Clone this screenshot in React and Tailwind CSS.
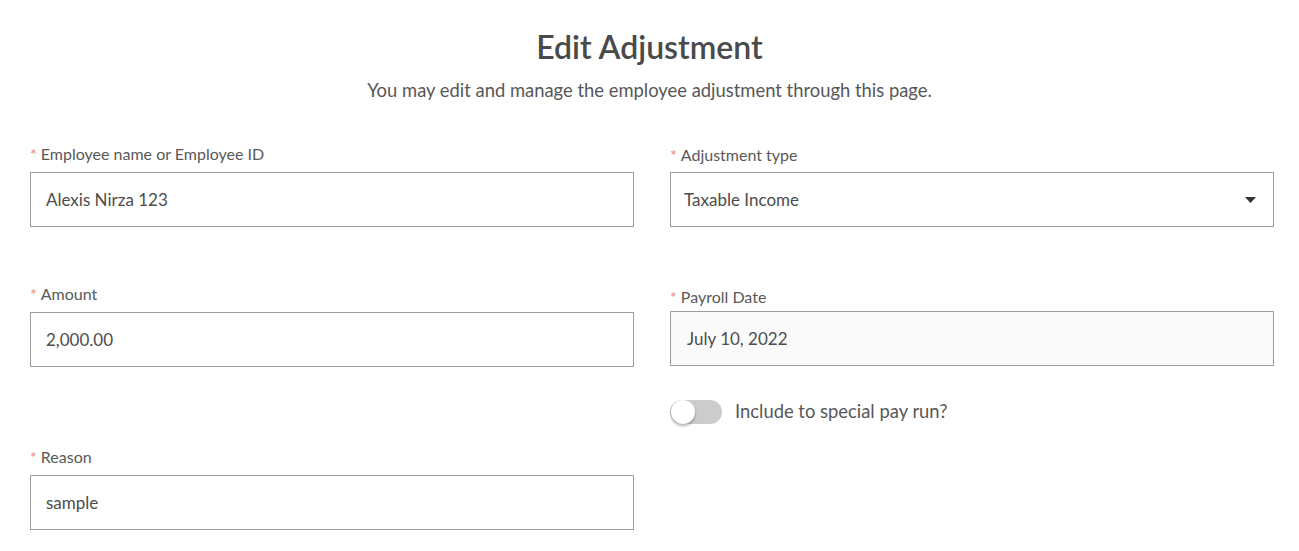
import { useState } from 'react'

function Label({ children, className = '' }) {
  return (
    <div className={`text-[16px] leading-[20px] text-[#595959] ${className}`}>
      <span className="text-[#f47c7c] mr-[4px]">*</span>
      {children}
    </div>
  )
}

function TextBox({ value, className = '' }) {
  return (
    <div className={`h-[55px] border border-[#9e9e9e] flex items-center px-[15px] text-[17px] text-[#4d4d4d] ${className}`}>
      {value}
    </div>
  )
}

export default function App() {
  const [special, setSpecial] = useState(false)

  return (
    <div className="w-[1299px] h-[551px] bg-white overflow-hidden" style={{ fontFamily: 'Lato, "Noto Sans", sans-serif' }}>
      <div className="text-center pt-[28px]">
        <h1 className="text-[32px] leading-[38px] font-semibold text-[#4a4a4a]">Edit Adjustment</h1>
        <p className="mt-[12px] text-[18.4px] leading-[24px] text-[#575757]">
          You may edit and manage the employee adjustment through this page.
        </p>
      </div>

      <div className="flex gap-[36px] pl-[30px] mt-[42px]">
        <div className="w-[604px] flex flex-col">
          <Label className="mb-[8px]">Employee name or Employee ID</Label>
          <TextBox value="Alexis Nirza 123" />

          <Label className="mt-[57px] mb-[8px]">Amount</Label>
          <TextBox value="2,000.00" />

          <Label className="mt-[80px] mb-[8px]">Reason</Label>
          <TextBox value="sample" />
        </div>

        <div className="w-[604px] flex flex-col pt-[1px]">
          <Label className="mb-[7px]">Adjustment type</Label>
          <div className="h-[55px] border border-[#9e9e9e] flex items-center justify-between pl-[13px] pr-[17px] text-[17px] text-[#4d4d4d]">
            <span>Taxable Income</span>
            <svg width="11" height="6" viewBox="0 0 11 6">
              <path d="M0 0 L11 0 L5.5 6 Z" fill="#333" />
            </svg>
          </div>

          <Label className="mt-[60px] mb-[4px]">Payroll Date</Label>
          <TextBox value="July 10, 2022" className="bg-[#fafafa] pl-[16px]" />

          <div className="mt-[32px] flex items-center gap-[13px]">
            <button
              onClick={() => setSpecial(!special)}
              className={`relative w-[52px] h-[24px] rounded-full ${special ? 'bg-[#4caf50]' : 'bg-[#cccccc]'}`}
            >
              <span
                className={`absolute top-0 ${special ? 'left-[28px]' : 'left-[1px]'} w-[24px] h-[24px] rounded-full bg-white shadow-[0_2px_3px_rgba(0,0,0,0.3)]`}
              />
            </button>
            <span className="text-[18.4px] text-[#575757]">Include to special pay run?</span>
          </div>
        </div>
      </div>
    </div>
  )
}
